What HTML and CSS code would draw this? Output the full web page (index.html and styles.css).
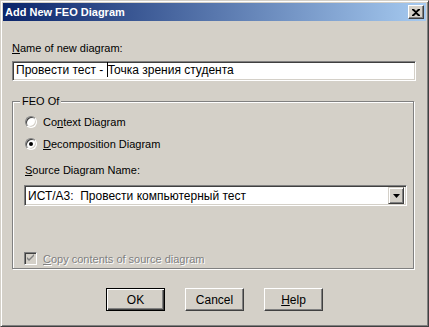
FILE: index.html
```html
<!DOCTYPE html>
<html lang="ru">
<head>
  <meta charset="UTF-8">
  <title>Add New FEO Diagram</title>
  <link rel="stylesheet" href="styles.css">
</head>
<body>

<div class="ventana">
  <div class="titulo">
    <span class="titulo-texto">Add New FEO Diagram</span>
    <span class="cerrar">
      <svg width="8" height="7" viewBox="0 0 8 7"><path d="M0 0h2l2 2 2-2h2v1L5 3.5 8 6v1H6L4 5 2 7H0V6l3-2.5L0 1z" fill="#000"/></svg>
    </span>
  </div>

  <div class="cuerpo">
    <div class="etiqueta"><u>N</u>ame of new diagram:</div>
    <div class="caja-texto">Провести тест - <span class="cursor"></span>Точка зрения студента</div>

    <div class="grupo">
      <span class="leyenda">FEO Of</span>

      <div class="opcion">
        <span class="radio"></span>
        <span>Co<u>n</u>text Diagram</span>
      </div>
      <div class="opcion">
        <span class="radio marcado"></span>
        <span><u>D</u>ecomposition Diagram</span>
      </div>

      <div class="etiqueta etiqueta-fuente"><u>S</u>ource Diagram Name:</div>
      <div class="combo">
        <span class="combo-texto">ИСТ/А3:&nbsp; Провести компьютерный тест</span>
        <span class="flecha">
          <svg width="7" height="4" viewBox="0 0 7 4"><path d="M0 0h7L3.5 4z" fill="#000"/></svg>
        </span>
      </div>

      <div class="opcion opcion-check">
        <span class="check">
          <svg width="9" height="9" viewBox="0 0 9 9"><path d="M1 3l2 2 5-5v2L3 7 1 5z" fill="#808080"/></svg>
        </span>
        <span class="desactivado"><u>C</u>opy contents of source diagram</span>
      </div>
    </div>

    <div class="botones">
      <button class="boton defecto">OK</button>
      <button class="boton">Cancel</button>
      <button class="boton"><u>H</u>elp</button>
    </div>
  </div>
</div>

</body>
</html>
```

FILE: styles.css
```css
html, body {
  margin: 0;
  background: #d4d0c8;
}

.ventana {
  width: 429px;
  height: 327px;
  box-sizing: border-box;
  padding: 2px;
  background: #d4d0c8;
  border: 1px solid;
  border-color: #d4d0c8 #404040 #404040 #d4d0c8;
  box-shadow: inset 1px 1px #fff, inset -1px -1px #808080;
  font-family: "Liberation Sans", Arial, sans-serif;
  font-size: 11px;
  color: #000;
}

.titulo {
  height: 18px;
  display: flex;
  align-items: center;
  justify-content: space-between;
  padding: 0 2px 0 2px;
  background: linear-gradient(to right, #0a246a, #a6caf0);
}

.titulo-texto {
  color: #fff;
  font-weight: bold;
  font-size: 11px;
}

.cerrar {
  width: 16px;
  height: 14px;
  box-sizing: border-box;
  display: flex;
  align-items: center;
  justify-content: center;
  background: #d4d0c8;
  border: 1px solid;
  border-color: #fff #404040 #404040 #fff;
  box-shadow: inset -1px -1px #808080;
}

.cuerpo {
  padding: 21px 0 0 9px;
}

.etiqueta {
  line-height: 13px;
}

.caja-texto {
  width: 404px;
  height: 20px;
  box-sizing: border-box;
  margin-top: 6px;
  padding: 0 3px;
  line-height: 16px;
  font-size: 12px;
  background: #fff;
  border: 1px solid;
  border-color: #808080 #fff #fff #808080;
  box-shadow: inset 1px 1px #404040, inset -1px -1px #d4d0c8;
}

.cursor {
  display: inline-block;
  width: 1px;
  height: 15px;
  background: #000;
  vertical-align: -3px;
}

.grupo {
  position: relative;
  width: 402px;
  margin-top: 20px;
  padding: 13px 0 3px 12px;
  box-sizing: border-box;
  border: 1px solid #808080;
  box-shadow: inset 1px 1px #fff, 1px 1px #fff;
}

.leyenda {
  position: absolute;
  top: -7px;
  left: 7px;
  padding: 0 2px;
  background: #d4d0c8;
  line-height: 13px;
}

.opcion {
  display: flex;
  align-items: center;
  gap: 6px;
  height: 13px;
  margin-bottom: 9px;
}

.radio {
  width: 12px;
  height: 12px;
  box-sizing: border-box;
  border-radius: 50%;
  background: #fff;
  border: 1px solid;
  border-color: #808080 #fff #fff #808080;
  box-shadow: inset 1px 1px #404040, inset -1px -1px #d4d0c8;
  display: flex;
  align-items: center;
  justify-content: center;
}

.radio.marcado::after {
  content: "";
  width: 4px;
  height: 4px;
  border-radius: 50%;
  background: #000;
}

.etiqueta-fuente {
  margin-top: 14px;
}

.combo {
  width: 383px;
  height: 21px;
  box-sizing: border-box;
  margin: 8px 0 0 -1px;
  display: flex;
  align-items: center;
  justify-content: space-between;
  padding: 0 2px 0 3px;
  background: #fff;
  border: 1px solid;
  border-color: #808080 #fff #fff #808080;
  box-shadow: inset 1px 1px #404040, inset -1px -1px #d4d0c8;
  font-size: 12px;
}

.flecha {
  width: 16px;
  height: 17px;
  box-sizing: border-box;
  display: flex;
  align-items: center;
  justify-content: center;
  background: #d4d0c8;
  border: 1px solid;
  border-color: #d4d0c8 #404040 #404040 #d4d0c8;
  box-shadow: inset 1px 1px #fff, inset -1px -1px #808080;
}

.opcion-check {
  margin: 46px 0 0 -1px;
}

.check {
  width: 13px;
  height: 13px;
  box-sizing: border-box;
  display: flex;
  align-items: center;
  justify-content: center;
  background: #d4d0c8;
  border: 1px solid;
  border-color: #808080 #fff #fff #808080;
  box-shadow: inset 1px 1px #404040, inset -1px -1px #d4d0c8;
}

.desactivado {
  color: #808080;
  text-shadow: 1px 1px #fff;
}

.botones {
  display: flex;
  justify-content: center;
  gap: 20px;
  margin: 19px 0 0 -9px;
}

.boton {
  width: 59px;
  height: 23px;
  padding: 0;
  font-family: inherit;
  font-size: 12px;
  color: #000;
  background: #d4d0c8;
  border: 1px solid;
  border-color: #fff #404040 #404040 #fff;
  box-shadow: inset -1px -1px #808080;
}

.boton.defecto {
  border-color: #000;
  box-shadow: inset 1px 1px #fff, inset -1px -1px #404040, inset -2px -2px #808080;
}
```
